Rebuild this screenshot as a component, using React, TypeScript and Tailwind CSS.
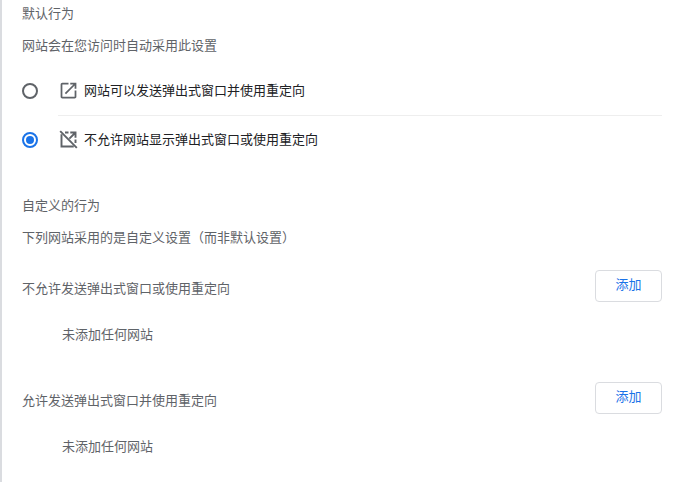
const font = { fontFamily: '"Noto Sans CJK SC", "Liberation Sans", sans-serif' }

function Radio({ checked }: { checked?: boolean }) {
  return (
    <div className={`flex h-4 w-4 shrink-0 items-center justify-center rounded-full border-2 ${checked ? 'border-[#1a73e8]' : 'border-[#5f6368]'}`}>
      {checked && <div className="h-2 w-2 rounded-full bg-[#1a73e8]" />}
    </div>
  )
}

function PopupIcon() {
  return (
    <svg viewBox="0 0 24 24" className="h-[21px] w-[21px] shrink-0" fill="#5f6368">
      <path d="M19 19H5V5h7V3H5c-1.11 0-2 .9-2 2v14c0 1.1.89 2 2 2h14c1.1 0 2-.9 2-2v-7h-2v7zM14 3v2h3.59l-9.83 9.83 1.41 1.41L19 6.41V10h2V3h-7z" />
    </svg>
  )
}

function BlockedIcon() {
  return (
    <svg viewBox="0 0 24 24" className="h-[21px] w-[21px] shrink-0" fill="none" stroke="#5f6368" strokeWidth="2.2">
      <path d="M4 6v14h14M8 4h4M20 16v-4" />
      <path d="M14 4h6v6M20 4l-7 7" />
      <path d="M2.5 2.5l19 19" />
    </svg>
  )
}

function OptionRow({ checked, icon, label, divider }: { checked?: boolean; icon: React.ReactNode; label: string; divider?: boolean }) {
  return (
    <div className="flex items-center gap-5">
      <Radio checked={checked} />
      <div className={`flex flex-1 items-center gap-[5px] ${divider ? 'h-[50px] border-b border-[#eeeeee]' : 'h-[47px]'}`}>
        {icon}
        <span className="-mt-0.5 text-[13px] text-[#202124]">{label}</span>
      </div>
    </div>
  )
}

function SiteList({ title }: { title: string }) {
  return (
    <div>
      <div className="flex h-8 items-center justify-between">
        <span className="relative top-[2px] text-[13px] text-[#5f6368]">{title}</span>
        <button className="h-8 w-[67px] rounded border border-[#dadce0] bg-white pb-1 text-[13px] text-[#1a73e8]">添加</button>
      </div>
      <p className="mt-[23px] pl-10 text-[13px] leading-[18px] text-[#5f6368]">未添加任何网站</p>
    </div>
  )
}

export default function App() {
  return (
    <div style={font} className="h-[482px] w-[678px] overflow-hidden border-l-2 border-[#dadce0] bg-white pl-5 pr-4">
      <p className="mt-1 text-[13px] leading-[18px] text-[#5f6368]">默认行为</p>
      <p className="mt-3.5 text-[13px] leading-[18px] text-[#5f6368]">网站会在您访问时自动采用此设置</p>
      <div className="mt-3">
        <OptionRow icon={<PopupIcon />} label="网站可以发送弹出式窗口并使用重定向" divider />
        <OptionRow checked icon={<BlockedIcon />} label="不允许网站显示弹出式窗口或使用重定向" />
      </div>
      <p className="mt-[33px] text-[13px] leading-[18px] text-[#5f6368]">自定义的行为</p>
      <p className="mt-3.5 text-[13px] leading-[18px] text-[#5f6368]">下列网站采用的是自定义设置（而非默认设置）</p>
      <div className="mt-6">
        <SiteList title="不允许发送弹出式窗口或使用重定向" />
      </div>
      <div className="mt-[39px]">
        <SiteList title="允许发送弹出式窗口并使用重定向" />
      </div>
    </div>
  )
}
